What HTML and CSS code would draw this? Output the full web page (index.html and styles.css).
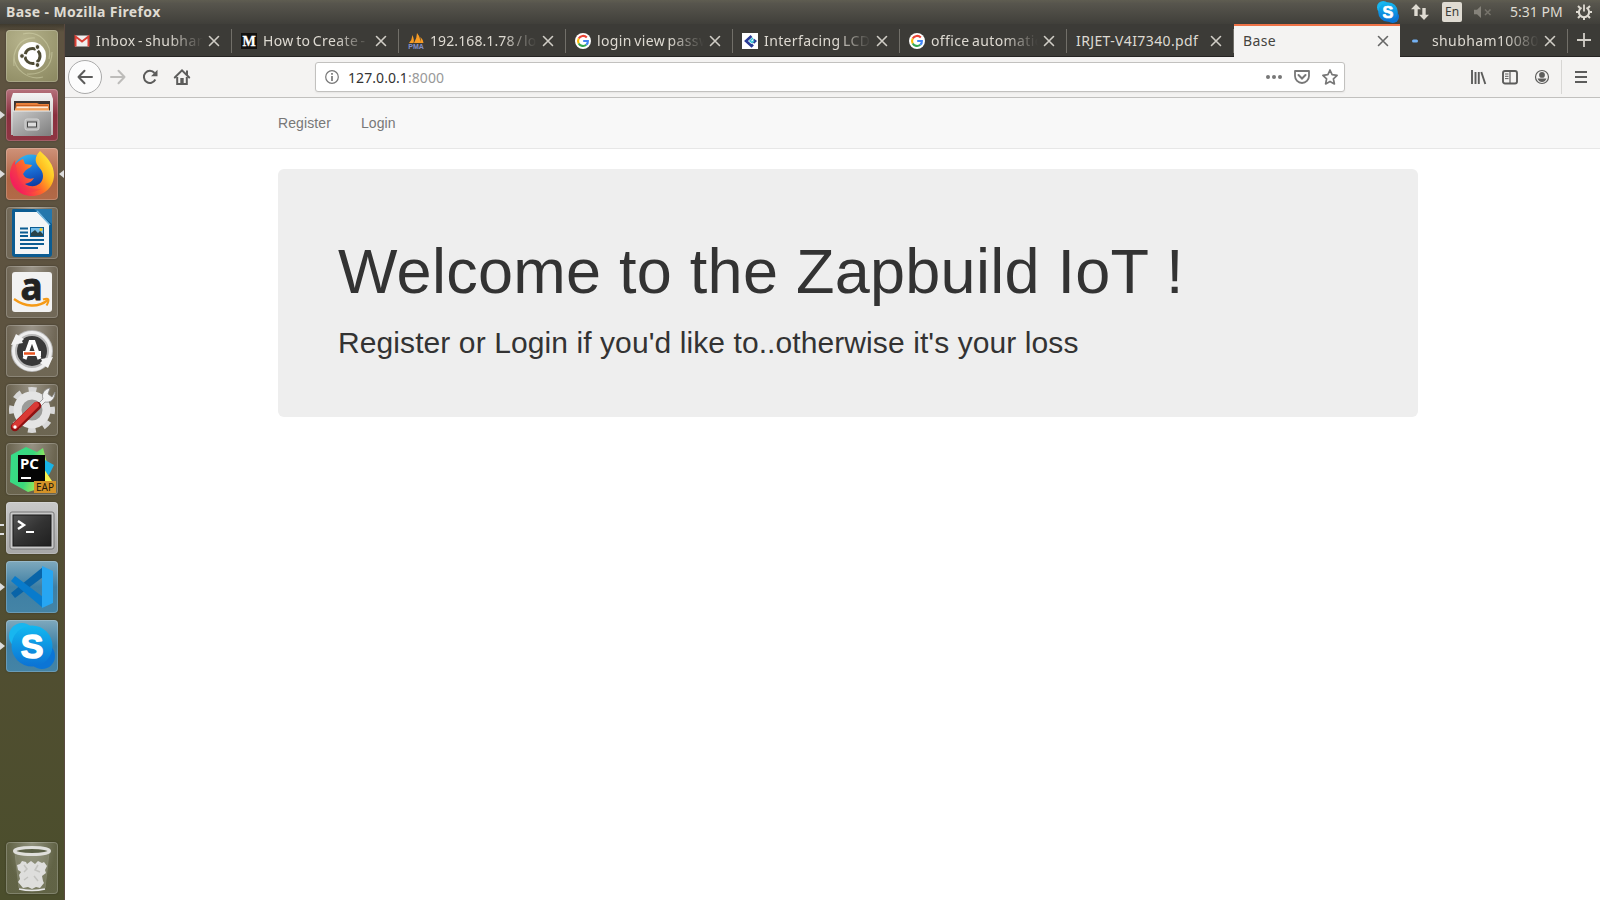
FILE: index.html
```html
<!DOCTYPE html>
<html lang="en">
<head>
<meta charset="utf-8">
<title>Base</title>
<link rel="stylesheet" href="styles.css">
</head>
<body>
<svg class="defs" width="0" height="0">
  <defs>
    <linearGradient id="metal" x1="0" y1="0" x2="1" y2="1"><stop offset="0" stop-color="#c9c9c9"/><stop offset="1" stop-color="#7e7e7e"/></linearGradient>
    <linearGradient id="silver" x1="0" y1="0" x2="0" y2="1"><stop offset="0" stop-color="#f4f4f4"/><stop offset="1" stop-color="#b5b5b5"/></linearGradient>
    <linearGradient id="fox" x1="0.95" y1="0.1" x2="0.1" y2="0.7"><stop offset="0" stop-color="#fff33f"/><stop offset="0.35" stop-color="#ffb81f"/><stop offset="0.6" stop-color="#ff6a2a"/><stop offset="1" stop-color="#f5205a"/></linearGradient>
    <linearGradient id="globe" x1="0.3" y1="0" x2="0.6" y2="1"><stop offset="0" stop-color="#2fb4f0"/><stop offset="0.5" stop-color="#1767cf"/><stop offset="1" stop-color="#0a2a90"/></linearGradient>
    <linearGradient id="sky" x1="0" y1="0" x2="0" y2="1"><stop offset="0" stop-color="#12b8f0"/><stop offset="1" stop-color="#0b72d4"/></linearGradient>
    <linearGradient id="term" x1="0" y1="0" x2="1" y2="1"><stop offset="0" stop-color="#555"/><stop offset="0.5" stop-color="#333"/><stop offset="1" stop-color="#1f1f1f"/></linearGradient>
    <linearGradient id="charm" x1="0" y1="0" x2="1" y2="0.4"><stop offset="0" stop-color="#35dc8c"/><stop offset="0.6" stop-color="#3bd77b"/><stop offset="1" stop-color="#b8ee4f"/></linearGradient>
    <symbol id="close" viewBox="0 0 12 12"><path d="M1.500 1.500l9 9M10.500 1.500l-9 9" stroke="currentColor" stroke-width="1.600" stroke-linecap="round"/></symbol>
    <symbol id="google" viewBox="0 0 16 16">
      <circle cx="8" cy="8" r="8" fill="#fff"/>
      <g fill="none" stroke-width="2.100">
        <path d="M11.800 4.500A5 5 0 0 0 3.700 5.600" stroke="#ea4335"/><path d="M3.700 5.600a5 5 0 0 0 0 4.800" stroke="#fbbc05"/><path d="M3.700 10.400a5 5 0 0 0 7.600 1.400" stroke="#34a853"/><path d="M11.300 11.800A4.600 4.600 0 0 0 12.900 8H8.200" stroke="#4285f4"/>
      </g>
    </symbol>
    <symbol id="skype" viewBox="0 0 46 46">
      <circle cx="13" cy="13" r="13" fill="#18b6ef"/><circle cx="33" cy="33" r="13" fill="#0b75d6"/><circle cx="23" cy="23" r="20.500" fill="url(#sky)"/>
      <text x="23" y="35" text-anchor="middle" class="skype-letter">S</text>
    </symbol>
  </defs>
</svg>

<header class="panel">
  <span class="panel-title">Base - Mozilla Firefox</span>
  <div class="tray">
    <svg class="tray-skype" width="22" height="22"><use href="#skype"/></svg>
    <svg class="tray-net" width="18" height="16" viewBox="0 0 18 16"><path d="M5 0l5 5.300H6.700V12H3.300V5.300H0zM13 16l5-5.300h-3.300V4h-3.400v6.700H8z" fill="#dfdbd2"/></svg>
    <span class="tray-lang">En</span>
    <svg class="tray-sound" width="18" height="12" viewBox="0 0 18 12"><path d="M0 3.800h3L7 0v12L3 8.200H0z" fill="#85827a"/><path d="M11 3.500l5.500 5.500M16.500 3.500L11 9" stroke="#77746c" stroke-width="1.500"/></svg>
    <span class="tray-time">5:31 PM</span>
    <svg class="tray-gear" width="16" height="16" viewBox="0 0 16 16"><g fill="none" stroke="#dfdbd2"><path d="M5.500 3.600a5.100 5.100 0 1 0 5 0" stroke-width="2"/><path d="M8 .5v7" stroke-width="1.800"/><path d="M2 2l2 2M14 2l-2 2M0 8h2.500M13.500 8H16M2 14l2-2M14 14l-2-2M8 13.500V16" stroke-width="2"/></g></svg>
  </div>
</header>

<div class="desktop">
<nav class="launcher">
  <div class="tile tile-dash"><svg viewBox="0 0 52 52">
    <g fill="none" stroke="#d5d5ae" stroke-width="1.200" opacity=".5"><path d="M8 36C6 20 14 7 29 8M17 4c16-4 30 10 26 25M46 22c0 14-9 23-25 22M37 47C22 51 8 39 8 26"/></g>
    <circle cx="26" cy="26" r="14" fill="#fff"/>
    <circle cx="26.500" cy="26" r="7.500" fill="none" stroke="#4e4b35" stroke-width="3" stroke-dasharray="13.200 2.500" stroke-dashoffset="6"/>
    <g fill="#4e4b35" stroke="#fff" stroke-width="1"><circle cx="16" cy="26" r="2.400"/><circle cx="31.500" cy="17" r="2.400"/><circle cx="31.500" cy="35" r="2.400"/></g></svg></div>
  <div class="tile tile-files running"><svg viewBox="0 0 52 52">
    <path d="M7 4h38l2 6v36H5V10z" fill="url(#silver)"/><path d="M8 12h36v10H8z" fill="#3c3431"/><path d="M10 14h21l2 1h10v8H9z" fill="#e8803b"/><path d="M10 16.500h32" stroke="#c75c20"/><path d="M11 17.500h31v2H10z" fill="#fce9d7"/><path d="M9 19.500h34v3H9z" fill="#f2a058"/>
    <path d="M7 22h38v25H7z" fill="url(#metal)"/><path d="M7 22h38" stroke="#ededed"/><rect x="19" y="30" width="14" height="11" rx="2" fill="#b7b7b7" stroke="#d5d5d5"/><rect x="21.500" y="33" width="9" height="5" fill="#ddd" stroke="#444"/></svg></div>
  <div class="tile tile-firefox running focused"><svg viewBox="0 0 52 52">
    <circle cx="25" cy="25" r="18.500" fill="url(#globe)"/>
    <path d="M34 3c8 7 14 14 14 24 0 12-10 21-22 21S4 39 4 27c0-7 2-11 5-15v5c2-3 5-5 8-6l2 5 7 1c-1 3-4 3-7 6l-2 3 2 3c3 2 6 2 9 1-2 4-6 5-9 6 8 5 18 1 18-8 0-7-6-9-7-14-1-4 1-8 4-11z" fill="url(#fox)"/><path d="M9 12c-4 8-6 18 1 26 6 7 17 8 25 3-13 1-24-5-24-17z" fill="#ef2d57" opacity=".35"/></svg></div>
  <div class="tile"><svg viewBox="0 0 52 52">
    <path d="M7 2h25l14 14v31q0 3-3 3H9q-3 0-3-3V4q0-2 1-2z" fill="#0b5c92"/><path d="M28 2h18v15z" fill="#2477ad"/><path d="M9 5h22l12 12v30H9z" fill="#f4f6f7"/><path d="M31 4l13 14" stroke="#7abbe2" stroke-width="1.500"/><path d="M14 21.500h8M14 25.500h8M14 29h8M14 33h24M14 37h24M14 41h18" stroke="#0b5c92" stroke-width="2"/><rect x="24.500" y="20.500" width="13" height="9" fill="#79c0ea" stroke="#0b5c92"/><path d="M25 29v-3l4-3 3 3 2-2 3 3v2z" fill="#29434a"/><circle cx="35" cy="22.500" r="1.500" fill="#f5ca22"/></svg></div>
  <div class="tile"><svg viewBox="0 0 52 52"><rect x="6" y="6" width="40" height="40" rx="3" fill="#f2f2f2"/><text x="25.500" y="33.500" text-anchor="middle" class="amazon-letter">a</text><path d="M8 33c11 8 24 9 34 1" fill="none" stroke="#f59a16" stroke-width="2.300"/><path d="M37 33.500c6-2 7 0 3.500 6" fill="none" stroke="#f59a16" stroke-width="2"/></svg></div>
  <div class="tile"><svg viewBox="0 0 52 52"><circle cx="26" cy="26" r="18" fill="#393939" stroke="#b8b8b8" stroke-width="6"/><circle cx="26" cy="26" r="18.500" fill="none" stroke="#eee" stroke-width="3"/><path d="M5 20l5-11 8 5-2 2 1 2zM47 32l-5 11-8-5 2-2-1-2z" fill="#f2f2f2"/><path d="M18.500 34l6-17h3l6 17" fill="none" stroke="#fff" stroke-width="4"/><path d="M17 28.500h18" stroke="#fff" stroke-width="5"/><path d="M18 28.500h11" stroke="#e95420" stroke-width="2.500"/></svg></div>
  <div class="tile"><svg viewBox="0 0 52 52"><circle cx="26" cy="26" r="20" fill="none" stroke="#d8d8d8" stroke-width="6" stroke-dasharray="7.850 7.850" stroke-dashoffset="4"/><circle cx="26" cy="26" r="14.500" fill="#9b9b98" stroke="#e4e4e4" stroke-width="8"/><path d="M32 20l5-5c-2-6 2-10 7-11l-2 6 4 3 3-5c0 8-5 11-10 10l-5 5z" fill="#f0f0f0" stroke="#888" stroke-width=".8"/><path d="M9 43l22-21" stroke="#8f1212" stroke-width="8.500" stroke-linecap="round"/><path d="M9 42l21-21" stroke="#d93a35" stroke-width="6" stroke-linecap="round"/><circle cx="9" cy="43" r="1.700" fill="#fff"/></svg></div>
  <div class="tile"><svg viewBox="0 0 52 52"><path d="M5 12l15-8 11 5 6-4 4 15-2 24-17 5-18-10z" fill="url(#charm)"/><path d="M37 16l11 6-5 10-6-1z" fill="#18b4e7"/><path d="M38 26l8 12H25l13-5z" fill="#f8f24e"/><rect x="12" y="12" width="27" height="27" fill="#050505"/><text x="14" y="26" class="pc-label">PC</text><path d="M15 35h10" stroke="#fff" stroke-width="2"/><rect x="28" y="38" width="22" height="12" fill="#d49328"/><text x="39" y="48" text-anchor="middle" class="eap-label">EAP</text></svg></div>
  <div class="tile tile-terminal running double"><svg viewBox="0 0 52 52"><rect x="4" y="10" width="44" height="37" rx="2" fill="#c9c9c9" stroke="#777"/><rect x="7" y="13" width="38" height="31" fill="url(#term)" stroke="#191919"/><path d="M12 19l6 4-6 4" fill="none" stroke="#fff" stroke-width="2.400"/><path d="M20 30h8" stroke="#fff" stroke-width="2"/></svg></div>
  <div class="tile tile-code running"><svg viewBox="0 0 52 52"><path d="M5 32l4 5 28-21V6z" fill="#0864a8"/><path d="M5 20l4-5 28 21v11z" fill="#087bcc"/><path d="M36 5l11 5v32l-11 5z" fill="#27a6f2"/></svg></div>
  <div class="tile tile-skype running"><svg viewBox="0 0 52 52"><use href="#skype" x="3" y="3" width="46" height="46"/></svg></div>
  <div class="tile tile-trash"><svg viewBox="0 0 52 52"><path d="M9 10h34l-4 36q-13 3-26 0z" fill="#b9bba9" opacity=".25" stroke="#d5d6cc"/><path d="M11 23l3-1 2-3 4 1 1 2 4-3 4 3 3-3 4 2 2-1 3 4-2 4 1 3-4 3 1 5 1 2-4 5-4-1-4 2-4-2-5 1-5-6 2-3-1-4 2-3-3-2z" fill="#dededc"/><path d="M18 23l3 4-3 3M32 23l-3 5 5 2M22 35l-4 3M28 34l4 5" fill="none" stroke="#c3c3bf" stroke-width="1.500"/><ellipse cx="26" cy="9" rx="17.500" ry="3.500" fill="#5b6047" stroke="#dfdfdb" stroke-width="3"/><path d="M13 47q13 3 26 0" fill="none" stroke="#e7e7e7" stroke-width="1.500"/></svg></div>
</nav>

<main class="browser">
  <div class="tabs">
    <div class="tab"><svg class="fav" viewBox="0 0 16 16"><path d="M1 2.500h14v11H1z" fill="#eee"/><path d="M1.500 13.500v-10L8 8.500l6.500-5v10" fill="none" stroke="#d93f35" stroke-width="2"/></svg><span class="label">Inbox - shubham</span><svg class="x"><use href="#close"/></svg></div>
    <div class="tab"><svg class="fav" viewBox="0 0 16 16"><path d="M0 0h16v16H0z" fill="#12110f"/><text x="8" y="12.500" text-anchor="middle" class="medium-letter">M</text></svg><span class="label">How to Create -</span><svg class="x"><use href="#close"/></svg></div>
    <div class="tab"><svg class="fav" viewBox="0 0 16 16"><path d="M1 10Q4 7 4.500 2q2 5 1 8zM6 10Q9 5 9 0q4 5 3 10zM12 10q1-3 .500-6 3 3 3 6z" fill="#f89c24"/><text x="8" y="15.500" text-anchor="middle" class="pma-label">PMA</text></svg><span class="label label-ip">192.168.1.78 / lo</span><svg class="x"><use href="#close"/></svg></div>
    <div class="tab"><svg class="fav"><use href="#google"/></svg><span class="label">login view passw</span><svg class="x"><use href="#close"/></svg></div>
    <div class="tab"><svg class="fav" viewBox="0 0 16 16"><path d="M0 0h16v16H0z" fill="#fff"/><path d="M9.500 3L4 8l5.500 5 1.500-1.500" fill="none" stroke="#293b96" stroke-width="2.600"/><path d="M11.500 6.500L13.500 8l-2 2" fill="none" stroke="#293b96" stroke-width="2"/><path d="M11 5L8 8l2 1.500 2-2" fill="none" stroke="#32c1d4" stroke-width="1.500"/></svg><span class="label">Interfacing LCD</span><svg class="x"><use href="#close"/></svg></div>
    <div class="tab"><svg class="fav"><use href="#google"/></svg><span class="label">office automatio</span><svg class="x"><use href="#close"/></svg></div>
    <div class="tab plain"><span class="label">IRJET-V4I7340.pdf</span><svg class="x"><use href="#close"/></svg></div>
    <div class="tab plain active"><span class="label">Base</span><svg class="x"><use href="#close"/></svg></div>
    <div class="tab"><svg class="fav" viewBox="0 0 16 16"><rect x="2" y="6.500" width="6" height="3" rx="1.500" fill="#74b1f3"/></svg><span class="label">shubham100804</span><svg class="x"><use href="#close"/></svg></div>
    <svg class="new-tab" width="14" height="14" viewBox="0 0 14 14"><path d="M7 0v14M0 7h14" stroke="#d2cfc8" stroke-width="1.800"/></svg>
  </div>

  <div class="toolbar">
    <span class="back"><svg width="16" height="16" viewBox="0 0 16 16"><path d="M15 8H1.500M7.500 1.800L1.500 8l6 6.200" fill="none" stroke="#5c5c5b" stroke-width="2" stroke-linecap="round" stroke-linejoin="round"/></svg></span>
    <svg class="forward" width="16" height="16" viewBox="0 0 16 16"><path d="M1 8h13.500M8.500 1.800l6 6.200-6 6.200" fill="none" stroke="#bdbcba" stroke-width="2" stroke-linecap="round" stroke-linejoin="round"/></svg>
    <svg class="reload" width="16" height="16" viewBox="0 0 16 16"><path d="M13.300 10.500A6 6 0 1 1 12.500 4" fill="none" stroke="#5c5c5b" stroke-width="2"/><path d="M15.500.8v6.400H9z" fill="#5c5c5b"/></svg>
    <svg class="home" width="16" height="16" viewBox="0 0 16 16"><path d="M.8 8.500L8 1.300l7.200 7.200" fill="none" stroke="#5c5c5b" stroke-width="2" stroke-linecap="round"/><path d="M3.200 8v7h9.600V8" fill="none" stroke="#5c5c5b" stroke-width="2"/><path d="M6.300 15V9h3.400v6z" fill="#5c5c5b"/><path d="M12 1.500h2V6h-2z" fill="#5c5c5b"/></svg>
    <div class="urlbar">
      <svg width="14" height="14" viewBox="0 0 14 14"><circle cx="7" cy="7" r="6.300" fill="none" stroke="#777" stroke-width="1.200"/><path d="M7 3v1.800M7 6v5" stroke="#777" stroke-width="1.700"/></svg>
      <span class="address">127.0.0.1<span class="port">:8000</span></span>
      <svg class="page-actions" width="16" height="16" viewBox="0 0 16 16"><g fill="#777"><circle cx="2" cy="8" r="2"/><circle cx="8" cy="8" r="2"/><circle cx="14" cy="8" r="2"/></g></svg>
      <svg class="gap12" width="16" height="16" viewBox="0 0 16 16"><path d="M1 2h14v5a7 7 0 0 1-14 0z" fill="none" stroke="#777" stroke-width="1.800" stroke-linejoin="round"/><path d="M4.500 6L8 9.500 11.500 6" fill="none" stroke="#777" stroke-width="2" stroke-linecap="round"/></svg>
      <svg class="gap12" width="16" height="16" viewBox="0 0 16 16"><path d="M8 1l2.100 4.700 5 .6-3.700 3.500 1 5.100L8 12.400l-4.400 2.500 1-5.100L.9 6.300l5-.6z" fill="none" stroke="#777" stroke-width="1.700" stroke-linejoin="round"/></svg>
    </div>
    <svg class="library" width="16" height="16" viewBox="0 0 16 16"><path d="M2 1v14M5.500 3v12M8.800 3v12M11.300 3l4 12" stroke="#5c5c5b" stroke-width="1.900"/></svg>
    <svg class="gap16" width="16" height="16" viewBox="0 0 16 16"><rect x="1" y="2" width="14" height="12.500" rx="2" fill="none" stroke="#5c5c5b" stroke-width="1.900"/><path d="M8 2v12" stroke="#5c5c5b" stroke-width="1.200"/><path d="M3 5h3.500M3 7.300h3.500M3 9.600h3.500" stroke="#5c5c5b"/></svg>
    <svg class="gap16" width="16" height="16" viewBox="0 0 16 16"><circle cx="8" cy="8" r="6.500" fill="none" stroke="#5c5c5b" stroke-width="1.200"/><circle cx="8" cy="5.900" r="2.900" fill="#5c5c5b"/><path d="M3.500 9.500h9Q11 13 8 13T3.500 9.500z" fill="#5c5c5b"/></svg>
    <span class="menu"><svg width="12" height="12" viewBox="0 0 12 12"><path d="M0 1h12M0 6h12M0 11h12" stroke="#5c5c5b" stroke-width="1.900"/></svg></span>
  </div>

  <div class="page">
    <nav class="site-nav"><a>Register</a><a>Login</a></nav>
    <section class="jumbotron">
      <h1>Welcome to the Zapbuild IoT !</h1>
      <h2>Register or Login if you'd like to..otherwise it's your loss</h2>
    </section>
  </div>
</main>
</div>
</body>
</html>
```

FILE: styles.css
```css
* { box-sizing: border-box; }
body { margin: 0; width: 1600px; height: 900px; overflow: hidden; background: #fff; font-family: "Noto Sans", sans-serif; }
svg { display: block; flex: none; overflow: visible; }
.defs { position: absolute; }

/* Top panel */
.panel { display: flex; align-items: center; height: 24px; padding: 0 8px 0 6px; background: linear-gradient(#5f5d51, #57554d 15%, #403f3a); color: #dfdbd2; }
.panel-title { font-size: 14px; font-weight: 700; line-height: 24px; letter-spacing: .38px; white-space: nowrap; }
.tray { display: flex; align-items: center; margin-left: auto; }
.tray-net { margin-left: 12px; }
.tray-lang { width: 20px; height: 20px; margin-left: 13px; border-radius: 2px; background: #dfdbd2; color: #3c3b37; font-size: 12px; line-height: 20px; text-align: center; }
.tray-sound { margin-left: 12px; }
.tray-time { width: 53px; margin-left: 18px; font-size: 14px; white-space: nowrap; line-height: 24px; }
.tray-gear { margin-left: 13px; }
.skype-letter { font: 700 34px "Liberation Sans", sans-serif; fill: #fff; stroke: #fff; stroke-width: 1.5px; stroke-linejoin: round; }

.desktop { display: flex; height: 876px; }

/* Launcher */
.launcher { display: flex; flex-direction: column; gap: 7px; width: 65px; padding: 6px 6px; background: linear-gradient(#3f3a2e, #5e5340 8px, #5d5340 35%, #534e33 60%, #4b4e2c); border-right: 1px solid #5a4a40; }
.tile { position: relative; width: 52px; height: 52px; border-radius: 4px; background: radial-gradient(ellipse at 50% 0, rgba(255,255,255,.38), rgba(255,255,255,.12) 65%); box-shadow: inset 0 0 0 1px rgba(255,255,255,.2), 0 0 2px rgba(0,0,0,.35); }
.tile svg { width: 52px; height: 52px; }
.tile-dash { background: radial-gradient(circle at 35% 20%, #b6b38c, #8a875f); }
.tile-files { background: linear-gradient(#b5727c, #8a2f3e 50%, #8e3643); }
.tile-firefox { background: linear-gradient(#cf9279, #b06442 60%, #b26a48); }
.tile-terminal { background: linear-gradient(#c9c9c9, #a6a6a6); }
.tile-code, .tile-skype { background: linear-gradient(#7fa9bd, #3e7fa4 50%, #4484a6); }
.tile-trash { margin-top: auto; }
.running::before { content: ""; position: absolute; left: -6px; top: 22px; border: 4px solid transparent; border-left: 5px solid #ddd; border-right: 0; }
.focused::after { content: ""; position: absolute; right: -6px; top: 22px; border: 4px solid transparent; border-right: 5px solid #ddd; border-left: 0; }
.running.double::before { width: 4px; height: 7px; border: solid #ddd; border-width: 2px 0; }
.amazon-letter { font: 700 37px "Noto Sans", sans-serif; fill: #222; stroke: #222; stroke-width: .8px; }
.pc-label { font: 700 15px "Noto Sans", sans-serif; fill: #fff; }
.eap-label { font: 10px "Noto Sans", sans-serif; fill: #24190a; }

/* Tab strip */
.browser { flex: 1; min-width: 0; }
.tabs { display: flex; align-items: center; height: 33px; background: #3c3b37; border-bottom: 1px solid #252422; color: #dedad2; }
.tab { position: relative; display: flex; align-items: center; width: 167px; height: 33px; padding: 1px 12px 0 9px; }
.tab::after { content: ""; position: absolute; right: 0; top: 5px; width: 1px; height: 24px; background: #716f69; }
.fav { width: 16px; height: 16px; margin-right: 6px; }
.label { flex: 1; min-width: 0; overflow: hidden; white-space: nowrap; font-size: 14px; line-height: 24px; letter-spacing: .38px; word-spacing: -1.6px; -webkit-mask-image: linear-gradient(90deg, #000 calc(100% - 36px), transparent calc(100% - 2px)); mask-image: linear-gradient(90deg, #000 calc(100% - 36px), transparent calc(100% - 2px)); }
.label-ip { letter-spacing: .1px; }
.tab .x { width: 12px; height: 12px; margin-left: 3px; color: #d0cdc6; }
.plain .label { -webkit-mask-image: none; mask-image: none; }
.active { width: 166px; margin-right: 1px; padding: 0 11px 0 9px; background: #f4f3f2; border-top: 2px solid #ee7247; color: #45443f; }
.active::after { display: none; }
.active .x { color: #666; }
.new-tab { margin-left: 9px; }
.medium-letter { font: 700 14px "Liberation Serif", serif; fill: #fff; stroke: #fff; stroke-width: .3px; }
.pma-label { font: 700 7px "Liberation Sans", sans-serif; fill: #8490c8; }

/* Toolbar */
.toolbar { display: flex; align-items: center; height: 41px; padding: 0 13px 0 3px; background: #f4f3f2; border-bottom: 1px solid #c1c0be; }
.back { display: flex; align-items: center; justify-content: center; width: 34px; height: 34px; border: 1px solid #aaa; border-radius: 50%; background: #fcfcfc; }
.forward { margin-left: 8px; }
.reload, .home { margin-left: 16px; }
.urlbar { display: flex; align-items: center; width: 1030px; height: 30px; margin-left: 125px; padding: 0 6px 0 9px; border: 1px solid #c2c1bf; border-radius: 3px; background: #fff; box-shadow: 0 1px 2px rgba(0,0,0,.06); }
.address { margin-left: 9px; color: #333; font-size: 14px; letter-spacing: .07px; white-space: nowrap; }
.port { color: #999; }
.page-actions { margin-left: auto; }
.gap12 { margin-left: 12px; }
.library { margin-left: 125px; }
.gap16 { margin-left: 16px; }
.menu { display: flex; align-items: center; height: 34px; margin-left: auto; padding-left: 13px; border-left: 1px solid #d7d6d4; }

/* Site content */
.page { font-family: "Liberation Sans", Arial, sans-serif; color: #333; }
.site-nav { display: flex; height: 51px; padding-left: 213px; gap: 30px; background: #f8f8f8; border-bottom: 1px solid #e7e7e7; color: #777; font-size: 14px; line-height: 50px; letter-spacing: .1px; }
.jumbotron { width: 1140px; margin: 20px 0 0 213px; padding: 48px 60px; border-radius: 6px; background: #eee; display: flow-root; }
.jumbotron h1 { margin: 20px 0 20px; font-size: 63px; font-weight: 400; line-height: 69px; letter-spacing: .26px; white-space: nowrap; }
.jumbotron h2 { margin: 0 0 10px; font-size: 30px; font-weight: 400; line-height: 33px; letter-spacing: .09px; white-space: nowrap; }
```
